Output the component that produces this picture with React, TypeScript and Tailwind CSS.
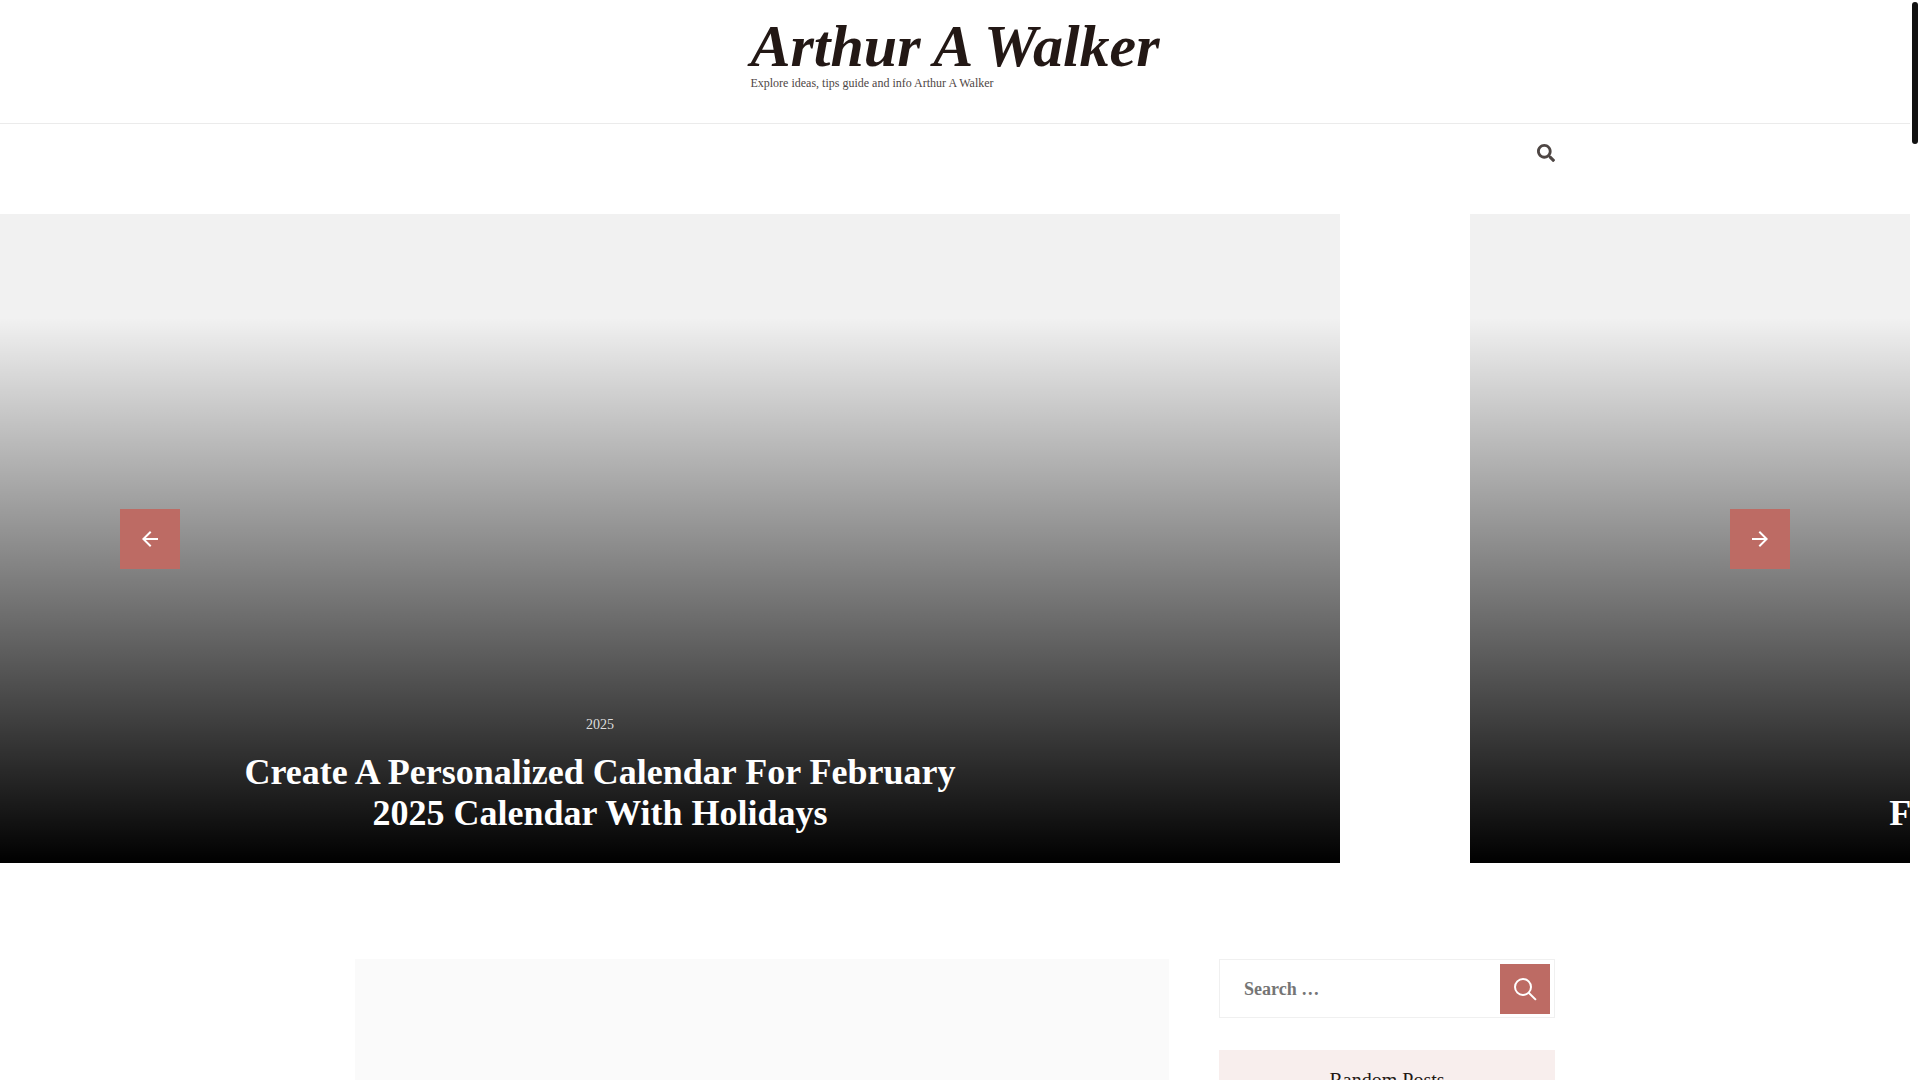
import { useState } from "react";
import { FaSearch } from "react-icons/fa";
import { MdArrowBack, MdArrowForward } from "react-icons/md";

type Slide = {
  id: number;
  category: string;
  title: string;
};

const slides: Slide[] = [
  { id: 1, category: "2025", title: "Create A Personalized Calendar For February 2025 Calendar With Holidays" },
  { id: 2, category: "", title: "February 2025 Calendar Printable Forms" },
];

function SiteHeader() {
  return (
    <header>
      <div className="flex justify-center border-b border-[#ebebeb] pt-4 pb-[33px]">
        <div>
          <h1 className="text-6xl leading-[60px] font-bold italic">
            <a href="#home">Arthur A Walker</a>
          </h1>
          <p className="text-xs leading-[14px] text-[#4e4644]">Explore ideas, tips guide and info Arthur A Walker</p>
        </div>
      </div>
      <div className="mx-auto flex max-w-[1200px] justify-end pt-5 pb-[52px]">
        <button type="button" aria-label="Open search" className="text-[#4e4644]">
          <FaSearch size={18} />
        </button>
      </div>
    </header>
  );
}

function SlideCard({ slide }: { slide: Slide }) {
  return (
    <article className="flex h-full w-[1480px] shrink-0 flex-col items-center justify-end bg-[#f1f1f1] bg-[linear-gradient(180deg,rgba(0,0,0,0)_16%,#000_100%)] pb-[29px] text-center text-white">
      {slide.category ? (
        <a href="#category" className="mb-[17px] text-sm leading-5 text-[#dddddd]">
          {slide.category}
        </a>
      ) : null}
      <h2 className="max-w-[780px] text-4xl leading-[41px] font-bold">
        <a href="#post">{slide.title}</a>
      </h2>
    </article>
  );
}

function Banner() {
  return (
    <section className="relative h-[649px] overflow-hidden" aria-label="Featured posts">
      <div className="-ml-[140px] flex h-full gap-[130px]">
        {slides.map((slide) => (
          <SlideCard key={slide.id} slide={slide} />
        ))}
      </div>
      <div className="pointer-events-none absolute inset-0 flex items-center justify-between px-[120px]">
        <button type="button" aria-label="Previous" className="pointer-events-auto flex size-[60px] items-center justify-center bg-[#bd6b64] text-white">
          <MdArrowBack size={24} />
        </button>
        <button type="button" aria-label="Next" className="pointer-events-auto flex size-[60px] items-center justify-center bg-[#bd6b64] text-white">
          <MdArrowForward size={24} />
        </button>
      </div>
    </section>
  );
}

function SearchWidget() {
  const [query, setQuery] = useState("");

  return (
    <form role="search" onSubmit={(event) => event.preventDefault()} className="flex border border-[#f0f0f0] pt-1 pr-1 pb-[3px]">
      <input
        type="search"
        aria-label="Search"
        value={query}
        onChange={(event) => setQuery(event.target.value)}
        placeholder="Search …"
        className="min-w-0 flex-1 pl-6 text-lg font-bold text-[#231815] outline-none placeholder:text-[#757575]"
      />
      <button type="submit" aria-label="Submit search" className="flex size-[50px] shrink-0 items-center justify-center bg-[#bd6b64] text-white">
        <svg width="24" height="24" viewBox="0 0 24 24" fill="none" stroke="currentColor" strokeWidth="2">
          <circle cx="10" cy="10" r="8" />
          <path d="M15.7 15.7l7.2 7.2" />
        </svg>
      </button>
    </form>
  );
}

export default function App() {
  return (
    <div className="relative h-screen overflow-hidden bg-white pr-[10px] font-['Liberation_Serif',serif] text-[#231815]">
      <SiteHeader />
      <Banner />
      <div className="mx-auto mt-24 flex max-w-[1200px] gap-[50px]">
        <main className="min-h-96 flex-1 bg-[#fafafa]" />
        <aside className="flex w-[336px] shrink-0 flex-col gap-8">
          <SearchWidget />
          <section>
            <h2 className="bg-[#f8eeed] py-4 text-center text-xl leading-7">Random Posts</h2>
          </section>
        </aside>
      </div>
      <div className="absolute top-0.5 right-0.5 h-[142px] w-1.5 rounded-full bg-[#111]" />
    </div>
  );
}
